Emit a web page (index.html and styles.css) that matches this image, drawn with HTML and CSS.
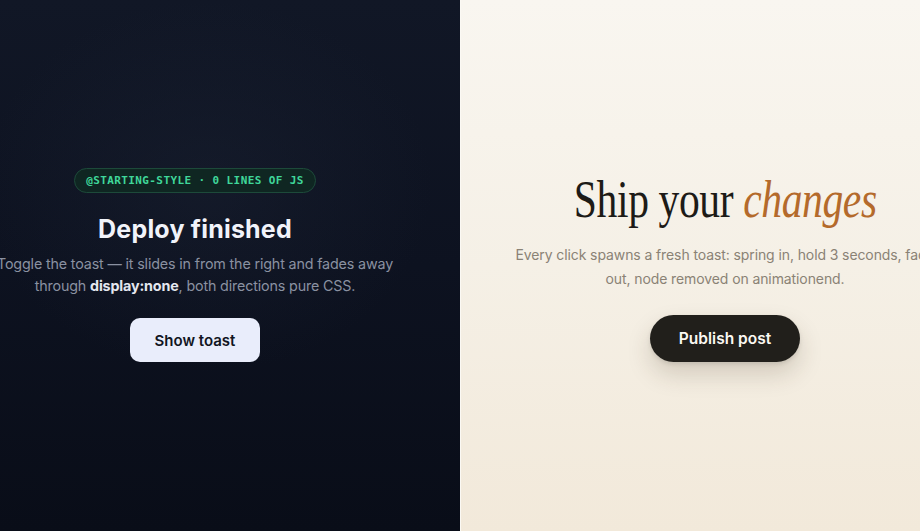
FILE: index.html
```html
<!DOCTYPE html>
<html lang="en">
<head>
<meta charset="utf-8">
<title>Toasts</title>
<link rel="stylesheet" href="styles.css">
</head>
<body>
<main class="split">
  <section class="panel panel-dark">
    <span class="badge">@starting-style · 0 lines of JS</span>
    <h2 class="dark-title">Deploy finished</h2>
    <p class="dark-text">Toggle the toast — it slides in from the right and fades away<br>through <strong>display:none</strong>, both directions pure CSS.</p>
    <button class="btn-light" type="button">Show toast</button>
  </section>
  <section class="panel panel-light">
    <h1 class="serif-title">Ship your <em>changes</em></h1>
    <p class="light-text">Every click spawns a fresh toast: spring in, hold 3 seconds, fade<br>out, node removed on animationend.</p>
    <button class="btn-dark" type="button">Publish post</button>
  </section>
</main>
</body>
</html>
```
FILE: styles.css
```css
* { box-sizing: border-box; }
html, body { margin: 0; padding: 0; }
body { width: 920px; height: 531px; overflow: hidden; }

.split {
  display: grid;
  grid-template-columns: 460px 460px;
  height: 531px;
}

.panel {
  display: flex;
  flex-direction: column;
  align-items: center;
  overflow: hidden;
  height: 531px;
}

.panel-dark {
  background: radial-gradient(ellipse 70% 50% at 45% 35%, rgba(30,38,56,0.35), rgba(0,0,0,0) 70%),
              linear-gradient(180deg, #111726 0%, #0d1220 50%, #090d18 100%);
  padding: 168px 70px 0 0;
  font-family: Inter, "DejaVu Sans", sans-serif;
}

.badge {
  display: inline-flex;
  align-items: center;
  height: 25px;
  padding: 0 11px;
  border: 1px solid #1d4a3a;
  background: #0f2622;
  border-radius: 13px;
  color: #3fd79a;
  font-family: "DejaVu Sans Mono", monospace;
  font-weight: 700;
  font-size: 11px;
  letter-spacing: 0.4px;
  text-transform: uppercase;
  white-space: nowrap;
}

.dark-title {
  margin: 21px 0 0;
  font-size: 25px;
  line-height: 30px;
  font-weight: 700;
  color: #f1f3fa;
  letter-spacing: 0.2px;
  white-space: nowrap;
}

.dark-text {
  margin: 9px 0 0;
  font-size: 14.3px;
  line-height: 22px;
  letter-spacing: -0.15px;
  color: #8a91a1;
  text-align: center;
  white-space: nowrap;
}
.dark-text strong { color: #e4e7ef; font-weight: 700; }

.btn-light {
  margin-top: 21px;
  width: 130px;
  height: 44px;
  border: 0;
  border-radius: 10px;
  background: #e9edfb;
  color: #111522;
  font-family: Inter, "DejaVu Sans", sans-serif;
  font-size: 15px;
  font-weight: 600;
  cursor: pointer;
}

.panel-light {
  background: linear-gradient(180deg, #f9f6f0 0%, #f5f0e6 50%, #f2e9da 100%);
  padding: 170px 0 0 70px;
  box-shadow: inset 1px 0 0 #fbf9f4;
  font-family: Inter, "DejaVu Sans", sans-serif;
}

.serif-title {
  margin: 0;
  font-family: "Liberation Serif", "DejaVu Serif", serif;
  font-weight: 400;
  font-size: 52px;
  line-height: 60px;
  color: #1d1b17;
  letter-spacing: -0.5px;
  white-space: nowrap;
  transform: scaleX(0.8);
}
.serif-title em { color: #b46a2b; font-style: italic; }

.light-text {
  margin: 13px 0 0;
  font-size: 14px;
  line-height: 24px;
  letter-spacing: -0.1px;
  color: #8a8275;
  text-align: center;
  white-space: nowrap;
}

.btn-dark {
  margin-top: 24px;
  width: 150px;
  height: 47px;
  border: 0;
  border-radius: 24px;
  background: #211f1b;
  color: #fbf8f2;
  font-family: Inter, "DejaVu Sans", sans-serif;
  font-size: 15.5px;
  font-weight: 600;
  box-shadow: 0 12px 24px rgba(60, 45, 20, 0.18), 0 2px 4px rgba(0,0,0,0.1);
  cursor: pointer;
}
```
